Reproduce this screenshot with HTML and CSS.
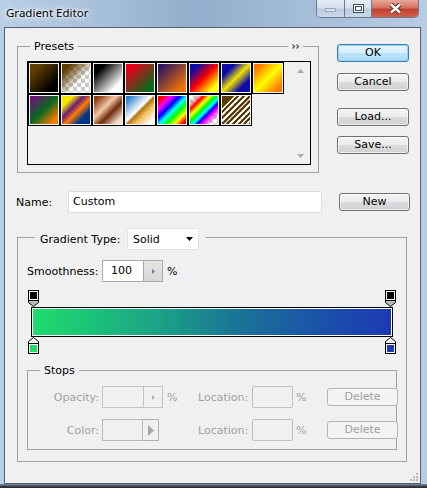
FILE: index.html
```html
<!DOCTYPE html>
<html>
<head>
<meta charset="utf-8">
<title>Gradient Editor</title>
<link rel="stylesheet" href="styles.css">
</head>
<body>
<div class="window">
  <div class="titlebar">
    <div class="title">Gradient Editor</div>
    <div class="caption">
      <div class="cap cap-min"><span class="min-glyph"></span></div>
      <div class="cap cap-max"><span class="max-glyph"></span></div>
      <div class="cap cap-close">
        <svg width="13" height="11" viewBox="0 0 13 11"><path d="M2 1.5L11 9.5M11 1.5L2 9.5" stroke="#5a2a24" stroke-width="4.4"/><path d="M2 1.5L11 9.5M11 1.5L2 9.5" stroke="#fff" stroke-width="2.4"/></svg>
      </div>
    </div>
  </div>

  <div class="client">
    <div class="top">
      <div class="group presets">
        <span class="gtitle">Presets</span>
        <span class="more"><svg width="8" height="5" viewBox="0 0 8 5"><path d="M0.5 0.5L2.5 2.5L0.5 4.5M4.5 0.5L6.5 2.5L4.5 4.5" fill="none" stroke="#555" stroke-width="1.2"/></svg></span>
        <div class="listbox">
          <div class="swatches">
            <div class="sw sw1"></div>
            <div class="sw sw2"></div>
            <div class="sw sw3"></div>
            <div class="sw sw4"></div>
            <div class="sw sw5"></div>
            <div class="sw sw6"></div>
            <div class="sw sw7"></div>
            <div class="sw sw8"></div>
            <div class="sw sw9"></div>
            <div class="sw sw10"></div>
            <div class="sw sw11"></div>
            <div class="sw sw12"></div>
            <div class="sw sw13"></div>
            <div class="sw sw14"></div>
            <div class="sw sw15"></div>
          </div>
          <div class="vscroll">
            <svg width="7" height="4" viewBox="0 0 7 4"><path d="M0 4L3.5 0L7 4Z" fill="#a8a8a8"/></svg>
            <svg width="7" height="4" viewBox="0 0 7 4"><path d="M0 0L3.5 4L7 0Z" fill="#a8a8a8"/></svg>
          </div>
        </div>
      </div>
      <div class="btncol">
        <button class="btn default">OK</button>
        <button class="btn b-cancel">Cancel</button>
        <button class="btn b-load">Load...</button>
        <button class="btn b-save">Save...</button>
      </div>
    </div>

    <div class="namerow">
      <span class="name-lbl">Name:</span>
      <div class="textbox name-input">Custom</div>
      <button class="btn b-new">New</button>
    </div>

    <div class="group gtype">
      <div class="gtype-title">
        <span class="gt-lbl">Gradient Type:</span>
        <div class="select">
          <span>Solid</span>
          <svg width="7" height="4" viewBox="0 0 7 4"><path d="M0 0H7L3.5 4Z" fill="#000"/></svg>
        </div>
      </div>

      <div class="smooth-row">
        <span class="smooth-lbl">Smoothness:</span>
        <div class="spin">
          <span class="spin-val">100</span>
          <span class="spin-btn"><svg width="3" height="5" viewBox="0 0 3 5"><path d="M0 0L3 2.5L0 5Z" fill="#6b7aa3"/></svg></span>
        </div>
        <span class="pct">%</span>
      </div>

      <div class="stops-track top-track">
        <svg width="11" height="17" viewBox="0 0 11 17"><path d="M0.5 10.5V12.5L5.5 16.5L10.5 12.5V10.5Z" fill="#bdbdbd" stroke="#000"/><rect x="0.5" y="0.5" width="10" height="10" fill="#fff" stroke="#000"/><rect x="2" y="2" width="7" height="7" fill="#000"/></svg>
        <svg width="11" height="17" viewBox="0 0 11 17"><path d="M0.5 10.5V12.5L5.5 16.5L10.5 12.5V10.5Z" fill="#bdbdbd" stroke="#000"/><rect x="0.5" y="0.5" width="10" height="10" fill="#fff" stroke="#000"/><rect x="2" y="2" width="7" height="7" fill="#000"/></svg>
      </div>
      <div class="bar"><div class="bar-fill"></div></div>
      <div class="stops-track bottom-track">
        <svg width="11" height="17" viewBox="0 0 11 17"><path d="M0.5 6.5V4.5L5.5 0.5L10.5 4.5V6.5Z" fill="#fff" stroke="#000"/><rect x="0.5" y="6.5" width="10" height="10" fill="#fff" stroke="#000"/><rect x="2" y="8" width="7" height="7" fill="#1edc6c"/></svg>
        <svg width="11" height="17" viewBox="0 0 11 17"><path d="M0.5 6.5V4.5L5.5 0.5L10.5 4.5V6.5Z" fill="#fff" stroke="#000"/><rect x="0.5" y="6.5" width="10" height="10" fill="#fff" stroke="#000"/><rect x="2" y="8" width="7" height="7" fill="#1b3ab2"/></svg>
      </div>

      <div class="group stops">
        <span class="gtitle">Stops</span>
        <div class="srow">
          <span class="s-lbl">Opacity:</span>
          <div class="spin disabled">
            <span class="spin-val"></span>
            <span class="spin-btn"><svg width="3" height="5" viewBox="0 0 3 5"><path d="M0 0L3 2.5L0 5Z" fill="#b0b0b0"/></svg></span>
          </div>
          <span class="s-pct">%</span>
          <span class="s-loc">Location:</span>
          <div class="locbox"></div>
          <span class="s-pct2">%</span>
          <button class="btn disabled b-del">Delete</button>
        </div>
        <div class="srow row2">
          <span class="s-lbl">Color:</span>
          <div class="colorbox">
            <span class="color-val"></span>
            <span class="color-btn"><svg width="6" height="11" viewBox="0 0 6 11"><path d="M0 0L6 5.5L0 11Z" fill="#a4a4a4"/></svg></span>
          </div>
          <span class="s-gap"></span>
          <span class="s-loc">Location:</span>
          <div class="locbox"></div>
          <span class="s-pct2">%</span>
          <button class="btn disabled b-del">Delete</button>
        </div>
      </div>
    </div>

    <svg class="grip" width="8" height="8" viewBox="0 0 8 8"><g fill="#b8b8b8"><rect x="6" y="0" width="2" height="2"/><rect x="3" y="3" width="2" height="2"/><rect x="6" y="3" width="2" height="2"/><rect x="0" y="6" width="2" height="2"/><rect x="3" y="6" width="2" height="2"/><rect x="6" y="6" width="2" height="2"/></g></svg>
  </div>
  <div class="frame-bottom"></div>
</div>
</body>
</html>
```

FILE: styles.css
```css
* { box-sizing: border-box; }
html, body { margin: 0; padding: 0; }
body {
  width: 427px;
  height: 488px;
  overflow: hidden;
  background: #2c2c2c;
  font-family: "DejaVu Sans", "Liberation Sans", sans-serif;
  font-size: 11px;
  color: #000;
}

.window {
  width: 427px;
  height: 488px;
  display: flex;
  flex-direction: column;
  background: linear-gradient(90deg, #b9cfe6 0%, #aac2dc 20%, #92aecc 45%, #a3bcd7 70%, #b7cde4 100%);
}

/* ---------- title bar ---------- */
.titlebar {
  height: 27px;
  flex-shrink: 0;
  display: flex;
  align-items: flex-start;
  padding: 0 8px 0 6px;
}
.title {
  flex: 1;
  font-family: "Noto Sans", "DejaVu Sans", sans-serif;
  font-size: 11.5px;
  line-height: 14px;
  margin-top: 6px;
  color: #000;
  text-shadow: 0 0 5px #fff, 0 0 3px #fff, 0 0 8px rgba(255,255,255,.8);
}
.caption {
  display: flex;
  height: 18px;
  border: 1px solid #6b7b90;
  border-top: none;
  border-radius: 0 0 5px 5px;
  overflow: hidden;
}
.cap {
  height: 17px;
  display: flex;
  align-items: center;
  justify-content: center;
}
.cap-min, .cap-max {
  background: linear-gradient(#e6edf5 0%, #d3dfec 45%, #bccde0 55%, #c9d8e8 100%);
  border-right: 1px solid #6b7b90;
}
.cap-min { width: 28px; }
.cap-max { width: 27px; }
.cap-close {
  width: 46px;
  background: linear-gradient(#e8a898 0%, #d6735f 45%, #c3402c 55%, #d0604c 100%);
}
.min-glyph {
  width: 11px;
  height: 4px;
  margin-top: 3px;
  background: #d8e0ea;
  border: 1px solid #9aa8ba;
}
.max-glyph {
  width: 11px;
  height: 9px;
  border: 1px solid #3d4b5c;
  background: #fff;
  box-shadow: inset 0 0 0 1px #fff, inset 0 0 0 2px #3d4b5c;
  margin-top: -1px;
}

/* ---------- client ---------- */
.client {
  position: relative;
  flex-shrink: 0;
  margin: 0 6px 0 4px;
  height: 457px;
  border: 1px solid #566070;
  background: #f0f0f0;
}
.frame-bottom {
  flex: 1;
  background: linear-gradient(#7990a8 0%, #3c4048 60%, #262626 100%);
}

.group {
  position: relative;
  border: 1px solid #a0a0a0;
}
.gtitle {
  position: absolute;
  top: -7px;
  left: 12px;
  padding: 0 4px;
  line-height: 13px;
  background: #f0f0f0;
}

.top {
  display: flex;
  align-items: flex-start;
  margin-top: 18px;
}
.top > * { flex-shrink: 0; }
.presets {
  margin-left: 12px;
  width: 302px;
  height: 127px;
  padding: 14px 0 0 9px;
}
.more {
  position: absolute;
  top: -4px;
  right: 15px;
  width: 15px;
  height: 7px;
  background: #f0f0f0;
  display: flex;
  justify-content: center;
  align-items: center;
}
.more svg { display: block; }

.listbox {
  width: 284px;
  height: 104px;
  border: 1px solid #000;
  display: flex;
  align-items: stretch;
}
.swatches {
  width: 256px;
  flex-shrink: 0;
  display: flex;
  flex-wrap: wrap;
  align-content: flex-start;
}
.vscroll {
  margin-left: auto;
  width: 17px;
  margin-right: 1px;
  display: flex;
  flex-direction: column;
  justify-content: space-between;
  align-items: center;
  padding: 7px 0 6px;
}
.vscroll svg { display: block; }

.sw {
  width: 32px;
  height: 32px;
  flex-shrink: 0;
  border: 1px solid #000;
  box-shadow: inset 0 0 0 1px #f4f4f4;
}
.sw1 { background: linear-gradient(135deg, #603e00 22%, #000 78%); }
.sw2 {
  background:
    linear-gradient(135deg, #5e3d00 18%, rgba(94,61,0,0) 62%),
    repeating-conic-gradient(#c8c8c8 0 25%, #ffffff 0 50%) 0 0 / 8px 8px;
}
.sw3 { background: linear-gradient(135deg, #000 22%, #fff 78%); }
.sw4 { background: linear-gradient(135deg, #e4001a 18%, #0b6a1c 82%); }
.sw5 { background: linear-gradient(135deg, #2a1462 12%, #ff7a00 88%); }
.sw6 { background: linear-gradient(135deg, #0b0ba8 18%, #ff0000 50%, #ffff00 82%); }
.sw7 { background: linear-gradient(135deg, #0b0ba8 25%, #f2e200 50%, #0b0ba8 75%); }
.sw8 { background: linear-gradient(135deg, #ff7800 15%, #ffff00 50%, #ff7800 85%); }
.sw9 { background: linear-gradient(135deg, #6e1674 12%, #0a6a1e 50%, #ff7a00 86%); }
.sw10 { background: linear-gradient(135deg, #f6e600 22%, #6a1e7c 40%, #ff7a00 55%, #00338a 75%); }
.sw11 { background: linear-gradient(135deg, #8a3c12 12%, #f2c6a6 40%, #6e2c0c 60%, #f0ddcf 85%); }
.sw12 { background: linear-gradient(135deg, #2a80cc 10%, #ffffff 46%, #b27610 52%, #f0c060 65%, #ffffff 90%); }
.sw13 { background: linear-gradient(135deg, #ff0000 12%, #ff00ff 26%, #0000ff 40%, #00ffff 52%, #00ff00 64%, #ffff00 77%, #ff0000 90%); }
.sw14 {
  background:
    linear-gradient(135deg, rgba(255,0,0,0) 14%, #ff0000 26%, #ffff00 36%, #00ff00 46%, #00ffff 55%, #0000ff 62%, #ff00ff 70%, rgba(255,0,255,0) 84%),
    repeating-conic-gradient(#c8c8c8 0 25%, #ffffff 0 50%) 0 0 / 8px 8px;
}
.sw15 {
  background:
    linear-gradient(135deg, #5a3c00 22%, rgba(0,0,0,0) 22%),
    repeating-linear-gradient(135deg, #5a3c00 0 2px, #ffffff 2px 4px, #5a3c00 4px 6px, rgba(0,0,0,0) 6px 8px),
    repeating-conic-gradient(#c8c8c8 0 25%, #ffffff 0 50%) 0 0 / 8px 8px;
}

/* ---------- buttons ---------- */
.btncol {
  margin-left: 18px;
  margin-top: -2px;
  width: 72px;
  display: flex;
  flex-direction: column;
}
.btn {
  display: block;
  flex-shrink: 0;
  width: 72px;
  height: 18px;
  padding: 0;
  margin: 0;
  font-family: inherit;
  font-size: 11px;
  line-height: 16px;
  color: #000;
  text-align: center;
  border: 1px solid #707070;
  border-radius: 3px;
  background: linear-gradient(#f4f4f4 0%, #ececec 48%, #dcdcdc 52%, #d0d0d0 100%);
  box-shadow: inset 0 0 0 1px rgba(255,255,255,.6);
}
.btn.default {
  border-color: #3c7fb1;
  background: linear-gradient(#e8f6fd 0%, #d6effc 48%, #bde5fc 52%, #a9daf6 100%);
  box-shadow: inset 0 0 0 1px #8fd3f5;
}
.b-cancel { margin-top: 11px; }
.b-load { margin-top: 17px; }
.b-save { margin-top: 10px; }

.btn.disabled {
  color: #a0a0a0;
  border-color: #b4b4b4;
  background: #f4f4f4;
  box-shadow: none;
}

/* ---------- name row ---------- */
.namerow {
  display: flex;
  align-items: center;
  margin: 18px 0 0 11px;
  height: 22px;
}
.namerow > * { flex-shrink: 0; }
.name-lbl { width: 52px; }
.textbox {
  height: 22px;
  background: #fff;
  border: 1px solid #dcdcdc;
  border-radius: 2px;
  line-height: 20px;
  padding-left: 4px;
}
.name-input { width: 254px; }
.b-new { width: 71px; margin-left: 17px; }

/* ---------- gradient type ---------- */
.gtype {
  margin: 24px 0 0 12px;
  width: 390px;
  height: 225px;
  padding: 22px 9px 0 9px;
}
.gtype-title {
  position: absolute;
  top: -10px;
  left: 17px;
  display: flex;
  align-items: center;
  padding: 0 7px 0 5px;
  background: #f0f0f0;
  height: 22px;
}
.gt-lbl { width: 87px; flex-shrink: 0; }
.select {
  width: 72px;
  height: 22px;
  flex-shrink: 0;
  background: #fff;
  border: 1px solid #e2e2e2;
  border-radius: 2px;
  display: flex;
  align-items: center;
  justify-content: space-between;
  padding: 0 5px 0 5px;
}
.select svg { display: block; }

.smooth-row {
  display: flex;
  align-items: center;
  height: 22px;
}
.smooth-row > * { flex-shrink: 0; }
.smooth-lbl { width: 75px; }
.spin {
  display: flex;
  width: 61px;
  height: 22px;
  border: 1px solid #a9a9a9;
  background: #fff;
}
.spin-val {
  width: 40px;
  flex-shrink: 0;
  padding-left: 8px;
  line-height: 20px;
}
.spin-btn {
  flex: 1;
  border-left: 1px solid #a9a9a9;
  background: linear-gradient(#e6e6e6, #d6d6d6);
  display: flex;
  align-items: center;
  justify-content: center;
}
.spin-btn svg { display: block; }
.pct { margin-left: 4px; }

.spin.disabled {
  border-color: #c2c2c2;
  background: #f0f0f0;
}
.spin.disabled .spin-btn {
  border-left-color: #c2c2c2;
  background: #f0f0f0;
}

.stops-track {
  display: flex;
  justify-content: space-between;
  padding: 0 1px;
  height: 17px;
}
.stops-track svg { display: block; }
.top-track { margin-top: 8px; }

.bar {
  margin: 0 4px;
  height: 30px;
  border: 1px solid #000;
  padding: 1px;
  background: #fff;
}
.bar-fill {
  height: 100%;
  background: linear-gradient(90deg, #1edc6c 0%, #1aa386 35%, #1a7894 55%, #1b58a6 75%, #1b3ab2 100%);
}

/* ---------- stops ---------- */
.stops {
  margin-top: 16px;
  width: 370px;
  height: 80px;
  padding: 15px 0 0 0;
}
.srow {
  display: flex;
  align-items: center;
  height: 22px;
  color: #a0a0a0;
}
.srow > * { flex-shrink: 0; }
.row2 { margin-top: 11px; }
.s-lbl {
  width: 71px;
  text-align: right;
  margin-right: 3px;
}
.s-pct {
  width: 35px;
  padding-left: 4px;
}
.s-gap { width: 39px; }
.s-loc { width: 54px; }
.locbox {
  width: 41px;
  height: 22px;
  border: 1px solid #c0c0c0;
  border-radius: 2px;
  background: #f0f0f0;
}
.s-pct2 {
  width: 34px;
  padding-left: 3px;
}
.b-del { width: 71px; }

.colorbox {
  display: flex;
  width: 57px;
  height: 22px;
}
.color-val {
  width: 41px;
  flex-shrink: 0;
  border: 1px solid #b8b8b8;
  background: #f0f0f0;
}
.color-btn {
  flex: 1;
  border: 1px solid #b0b0b0;
  border-left: none;
  display: flex;
  align-items: center;
  justify-content: center;
}
.color-btn svg { display: block; }

.grip {
  position: absolute;
  right: 2px;
  bottom: 2px;
  display: block;
}
```
